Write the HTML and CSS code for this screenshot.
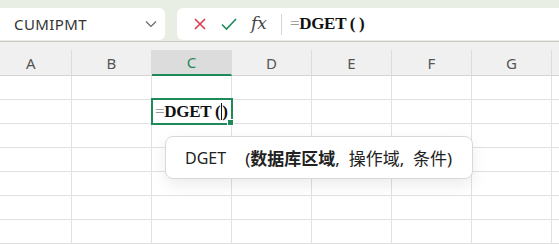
FILE: index.html
```html
<!DOCTYPE html>
<html lang="zh-CN">
<head>
    <meta charset="UTF-8">
    <title>DGET</title>
    <link rel="stylesheet" href="styles.css">
</head>
<body>
    <div class="toolbar">
        <div class="namebox">
            <span class="name">CUMIPMT</span>
            <svg class="chevron" width="12" height="8" viewBox="0 0 12 8"><path d="M1 1.5 L6 6.5 L11 1.5" fill="none" stroke="#666" stroke-width="1.2"/></svg>
        </div>
        <div class="formulabox">
            <svg class="icon" width="14" height="14" viewBox="0 0 14 14"><path d="M2 2 L12 12 M12 2 L2 12" stroke="#d83b4f" stroke-width="1.6"/></svg>
            <svg class="icon" width="16" height="14" viewBox="0 0 16 14"><path d="M1 7.5 L5.5 12 L15 2" fill="none" stroke="#1e8a5a" stroke-width="1.6"/></svg>
            <span class="fx">fx</span>
            <span class="sep"></span>
            <span class="formula"><span class="eq">=</span>DGET ( )</span>
        </div>
    </div>

    <div class="sheet">
        <div class="grid">
            <div class="head">A</div>
            <div class="head">B</div>
            <div class="head active">C</div>
            <div class="head">D</div>
            <div class="head">E</div>
            <div class="head">F</div>
            <div class="head">G</div>
            <div class="head last"></div>
        </div>
        <div class="grid rows" id="rows"></div>

        <div class="editcell">
            <span class="eq">=</span>DGET (<span class="caret"></span>)
            <span class="handle"></span>
        </div>

        <div class="tip">
            <span class="fn">DGET</span>
            <span class="args">(<b>数据库区域</b>,&nbsp; 操作域,&nbsp; 条件)</span>
        </div>
    </div>

    <script>
        const rows = document.getElementById('rows');
        for (let r = 0; r < 7; r++) {
            for (let c = 0; c < 8; c++) {
                const cell = document.createElement('div');
                cell.classList.add('cell');
                if (c === 7) cell.classList.add('last');
                rows.appendChild(cell);
            }
        }
    </script>
</body>
</html>
```

FILE: styles.css
```css
body {
    margin: 0;
    background: #fff;
    font-family: "Noto Sans", "Noto Sans CJK SC", sans-serif;
    overflow: hidden;
}

.toolbar {
    display: flex;
    gap: 12px;
    padding: 8px 0 1px;
    background: #e9eee4;
    border-bottom: 1px solid #c9c9c9;
}

.namebox {
    width: 165px;
    height: 32px;
    box-sizing: border-box;
    background: #fff;
    border-radius: 0 6px 6px 0;
    display: flex;
    align-items: center;
    justify-content: space-between;
    padding: 0 8px 0 14px;
}

.name {
    font-size: 15px;
    color: #333;
    letter-spacing: 0.4px;
}

.formulabox {
    flex: 1;
    height: 32px;
    background: #fff;
    border-radius: 6px 0 0 6px;
    display: flex;
    align-items: center;
    padding-left: 16px;
}

.icon {
    margin-right: 14px;
}

.fx {
    font-family: "DejaVu Serif", serif;
    font-style: italic;
    font-size: 17px;
    color: #444;
    margin-top: -3px;
}

.sep {
    width: 1px;
    height: 21px;
    background: #d6d6d6;
    margin: 0 8px 0 14px;
}

.formula, .editcell {
    font-family: "Liberation Serif", "DejaVu Serif", serif;
    font-weight: bold;
    font-size: 17px;
    color: #111;
}

.formula {
    letter-spacing: -0.3px;
}

.eq {
    font-weight: normal;
    color: #999;
}

.sheet {
    position: relative;
    background: #f0f0f0;
    padding-top: 8px;
}

.grid {
    display: grid;
    grid-template-columns: 72px repeat(6, 80px) 1fr;
}

.head {
    height: 25px;
    border-right: 1px solid #dcdcdc;
    border-bottom: 1px solid #d4d4d4;
    display: flex;
    align-items: center;
    justify-content: center;
    font-size: 15px;
    color: #555;
}

.head:first-child {
    justify-content: flex-start;
    padding-left: 26px;
}

.head.active {
    background: #dcdcdc;
    color: #1e8a5a;
    border-bottom: 2px solid #1e8a5a;
    height: 24px;
}

.rows {
    background: #fff;
}

.cell {
    height: 23px;
    border-right: 1px solid #e1e1e1;
    border-bottom: 1px solid #e1e1e1;
}

.last {
    border-right: none;
}

.editcell {
    position: absolute;
    left: 151px;
    top: 56px;
    width: 82px;
    height: 27px;
    box-sizing: border-box;
    border: 2px solid #1e8a5a;
    background: #fff;
    display: flex;
    align-items: center;
    padding-left: 2px;
    letter-spacing: -0.3px;
}

.caret {
    width: 1px;
    height: 17px;
    background: #111;
    margin: 0 0 0 1px;
}

.handle {
    position: absolute;
    right: -3px;
    bottom: -3px;
    width: 5px;
    height: 5px;
    background: #1e8a5a;
    border: 1px solid #fff;
}

.tip {
    position: absolute;
    left: 165px;
    top: 94px;
    width: 308px;
    height: 43px;
    box-sizing: border-box;
    background: #fff;
    border: 1px solid #d8d8d8;
    border-radius: 8px;
    box-shadow: 0 6px 16px rgba(0, 0, 0, 0.08);
    display: flex;
    align-items: center;
    padding-left: 19px;
    font-size: 16px;
    color: #222;
}

.fn {
    margin-right: 19px;
}

.args {
    font-size: 17px;
}

.args b {
    font-weight: bold;
}
```
